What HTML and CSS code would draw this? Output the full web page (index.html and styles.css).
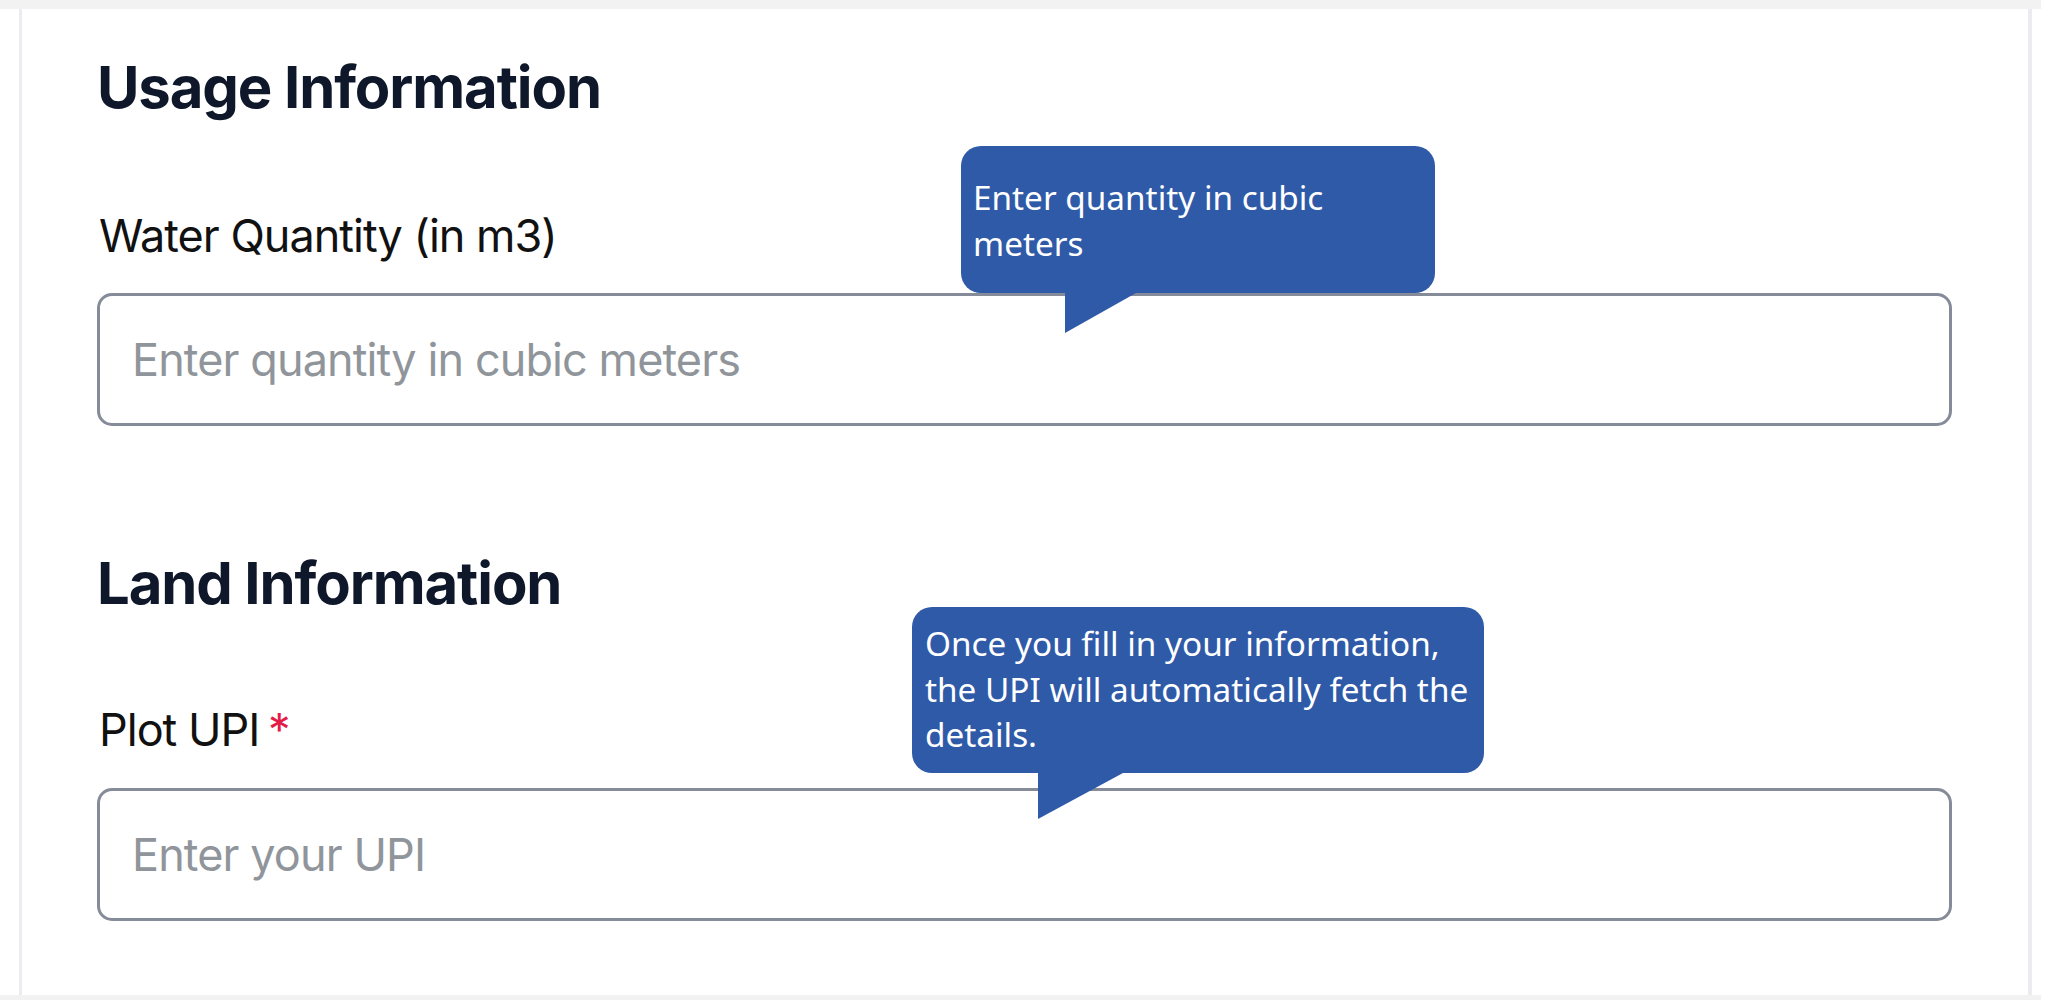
FILE: index.html
```html
<!DOCTYPE html>
<html lang="en">
<head>
<meta charset="utf-8">
<title>Usage and Land Information</title>
<link rel="stylesheet" href="styles.css">
</head>
<body>
<div class="frame">
  <div class="sheet">
    <div class="card">
      <section class="section">
        <h2 class="heading">Usage Information</h2>
        <label class="label label-first" for="qty">Water Quantity (in m3)</label>
        <input class="field" id="qty" type="text" placeholder="Enter quantity in cubic meters">
      </section>
      <section class="section section-land">
        <h2 class="heading">Land Information</h2>
        <label class="label label-second" for="upi">Plot UPI <span class="req">*</span></label>
        <input class="field field-second" id="upi" type="text" placeholder="Enter your UPI">
      </section>
      <div class="tip tip-one">Enter quantity in cubic<br>meters</div>
      <div class="tip tip-two">Once you fill in your information,<br>the UPI will automatically fetch the<br>details.</div>
    </div>
  </div>
</div>
</body>
</html>
```

FILE: styles.css
```css
html, body {
  margin: 0;
  padding: 0;
  background: #ffffff;
}

.frame {
  width: 2041px;
  background: #f2f2f2;
  padding: 9px 0 5px;
}

.sheet {
  background: #ffffff;
  height: 986px;
  padding-left: 19px;
}

.card {
  position: relative;
  box-sizing: border-box;
  width: 2013px;
  height: 100%;
  border-left: 3px solid #ebebf0;
  border-right: 4px solid #ebebf0;
  padding: 43px 0 0 75px;
}

.section {
  display: flex;
  flex-direction: column;
  width: 1855px;
}

.section-land {
  margin-top: 122px;
}

.heading {
  margin: 0;
  font-family: Inter, "Liberation Sans", sans-serif;
  font-weight: 700;
  font-size: 58px;
  line-height: 70px;
  letter-spacing: -1.1px;
  color: #0f172a;
}

.label {
  font-family: Inter, "Liberation Sans", sans-serif;
  font-weight: 400;
  font-size: 45px;
  line-height: 55px;
  letter-spacing: -1px;
  color: #111111;
  padding-left: 2px;
}

.label-first {
  margin-top: 86px;
}

.label-second {
  margin-top: 84px;
}

.req {
  color: #e11d48;
  margin-left: -3px;
}

.field {
  box-sizing: border-box;
  margin-top: 30px;
  width: 1855px;
  height: 133px;
  border: 3px solid #858b98;
  border-radius: 15px;
  background: #ffffff;
  padding: 0 0 0 32px;
  font-family: Inter, "Liberation Sans", sans-serif;
  font-size: 45px;
  letter-spacing: -0.9px;
  color: #111111;
  outline: none;
}

.field-second {
  margin-top: 31px;
}

.field::placeholder {
  color: #8f959a;
  opacity: 1;
}

.tip {
  position: absolute;
  z-index: 2;
  box-sizing: border-box;
  background: #2f5aa8;
  color: #ffffff;
  border-radius: 20px;
  font-family: "Noto Sans", "Open Sans", sans-serif;
  font-size: 33.3px;
  line-height: 45.5px;
  white-space: nowrap;
}

.tip::after {
  content: "";
  position: absolute;
  top: 100%;
  background: #2f5aa8;
  clip-path: polygon(0 0, 100% 0, 0 100%);
}

.tip-one {
  left: 939px;
  top: 137px;
  width: 474px;
  height: 147px;
  padding: 29px 20px 0 12px;
}

.tip-one::after {
  left: 104px;
  width: 71px;
  height: 40px;
}

.tip-two {
  left: 890px;
  top: 598px;
  width: 572px;
  height: 166px;
  padding: 14px 8px 0 13px;
}

.tip-two::after {
  left: 126px;
  width: 85px;
  height: 46px;
}
```
